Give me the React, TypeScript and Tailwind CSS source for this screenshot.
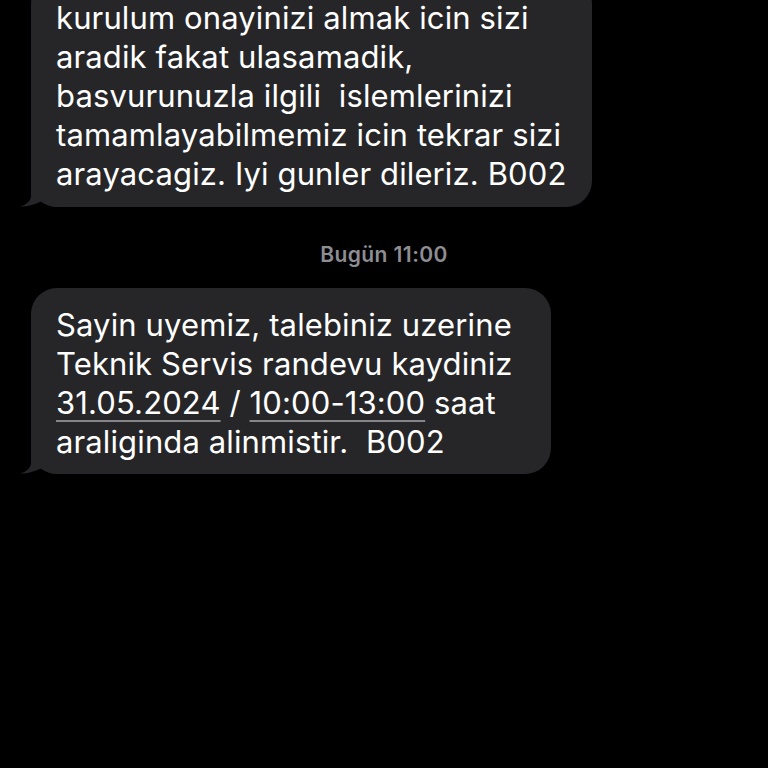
import React from "react";

const FONT = { fontFamily: '"Inter", "Liberation Sans", sans-serif' };

// small curled tail at the bubble's bottom-left
function Tail() {
  return (
    <svg
      className="absolute -left-[11px] bottom-0"
      width="40"
      height="26"
      viewBox="0 0 40 26"
      fill="#262628"
    >
      <path d="M11 0 L11 15 C11 20 6 24 0 25.5 C7 26 14 23.5 21 20.5 C25 22.5 30 26 37 26 L40 26 L40 0 Z" />
    </svg>
  );
}

function Bubble({ className, children }: { className: string; children: React.ReactNode }) {
  return (
    <div className={`relative ml-[31px] rounded-[26px] bg-[#262628] pl-[25px] text-[31px] leading-[39px] tracking-[0.004em] text-white ${className}`}>
      <Tail />
      <div className="relative">{children}</div>
    </div>
  );
}

export default function App() {
  return (
    <div className="h-[768px] w-[768px] overflow-hidden bg-black" style={FONT}>
      <Bubble className="-mt-[22px] w-[561px] pt-[20px] pb-[14px]">
        <div className="whitespace-pre">kurulum onayinizi almak icin sizi</div>
        <div className="whitespace-pre">aradik fakat ulasamadik,</div>
        <div className="whitespace-pre">basvurunuzla ilgili  islemlerinizi</div>
        <div className="whitespace-pre">tamamlayabilmemiz icin tekrar sizi</div>
        <div className="whitespace-pre">arayacagiz. Iyi gunler dileriz. B002</div>
      </Bubble>

      <div className="mt-[35px] mb-[20px] text-center text-[21px] font-semibold leading-[26px] tracking-[0.02em] text-[#8d8d93]">
        Bugün 11:00
      </div>

      <Bubble className="w-[520px] pt-[17px] pb-[13px]">
        <div className="whitespace-pre">Sayin uyemiz, talebiniz uzerine</div>
        <div className="whitespace-pre">Teknik Servis randevu kaydiniz</div>
        <div className="whitespace-pre">
          <span className="underline decoration-[#86868a] decoration-2 underline-offset-[6px]">31.05.2024</span>
          {" / "}
          <span className="underline decoration-[#86868a] decoration-2 underline-offset-[6px]">10:00-13:00</span>
          {" saat"}
        </div>
        <div className="whitespace-pre">araliginda alinmistir.  B002</div>
      </Bubble>
    </div>
  );
}
